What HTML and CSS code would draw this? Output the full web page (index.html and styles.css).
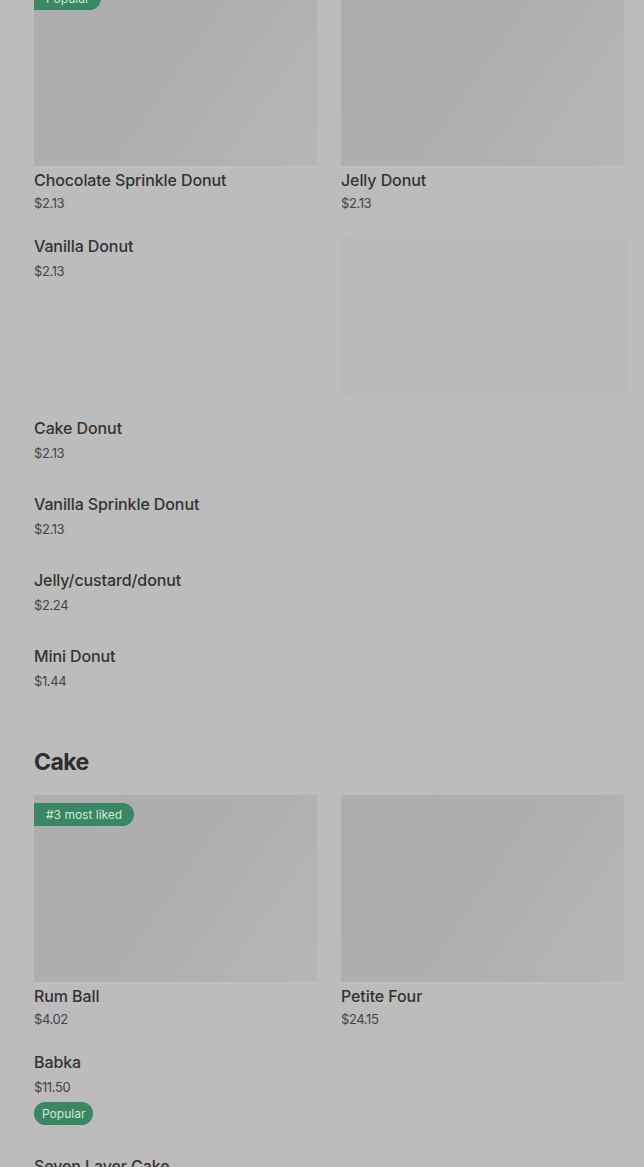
FILE: index.html
```html
<!DOCTYPE html>
<html>
<head>
<meta charset="utf-8">
<link rel="stylesheet" href="styles.css">
</head>
<body>
<main class="page">
  <section class="section">
    <div class="grid">
      <div class="card">
        <div class="thumb"><span class="badge badge-flag">Popular</span></div>
        <div class="name">Chocolate Sprinkle Donut</div>
        <div class="price">$2.13</div>
      </div>
      <div class="card">
        <div class="thumb"></div>
        <div class="name">Jelly Donut</div>
        <div class="price">$2.13</div>
      </div>
    </div>
    <div class="row row-ghost">
      <div class="row-text">
        <div class="name">Vanilla Donut</div>
        <div class="price price-list">$2.13</div>
      </div>
      <div class="ghost"></div>
    </div>
    <div class="list">
      <div class="item">
        <div class="name">Cake Donut</div>
        <div class="price price-list">$2.13</div>
      </div>
      <div class="item">
        <div class="name">Vanilla Sprinkle Donut</div>
        <div class="price price-list">$2.13</div>
      </div>
      <div class="item">
        <div class="name">Jelly/custard/donut</div>
        <div class="price price-list">$2.24</div>
      </div>
      <div class="item">
        <div class="name">Mini Donut</div>
        <div class="price price-list">$1.44</div>
      </div>
    </div>
  </section>

  <section class="section section-cake">
    <h2 class="heading">Cake</h2>
    <div class="grid">
      <div class="card">
        <div class="thumb"><span class="badge badge-flag">#3 most liked</span></div>
        <div class="name">Rum Ball</div>
        <div class="price">$4.02</div>
      </div>
      <div class="card">
        <div class="thumb"></div>
        <div class="name">Petite Four</div>
        <div class="price">$24.15</div>
      </div>
    </div>
    <div class="list list-cake">
      <div class="item">
        <div class="name">Babka</div>
        <div class="price price-list">$11.50</div>
        <span class="badge badge-pill">Popular</span>
      </div>
      <div class="item">
        <div class="name">Seven Layer Cake</div>
      </div>
    </div>
  </section>
</main>
</body>
</html>
```
FILE: styles.css
```css
html, body {
  margin: 0;
  padding: 0;
  background: #bcbcbc;
  height: 1167px;
  overflow: hidden;
}
body {
  font-family: Inter, Roboto, "Liberation Sans", sans-serif;
  color: #333333;
}
.page {
  margin-top: -21px;
  padding: 0 20px 0 34px;
}
.grid {
  display: grid;
  grid-template-columns: 283px 283px;
  column-gap: 24px;
}
.card {
  display: flex;
  flex-direction: column;
}
.thumb {
  height: 187px;
  background: linear-gradient(125deg, #adadad 0%, #afafaf 55%, #b6b6b6 100%);
  position: relative;
  margin-bottom: 2px;
  box-shadow: 0 3px 2px -1px rgba(255,255,255,0.08);
}
.name {
  font-size: 16px;
  font-weight: 500;
  line-height: 24px;
  color: #333333;
  letter-spacing: -0.1px;
}
.price {
  font-size: 13px;
  line-height: 20px;
  color: #444444;
  margin-top: 1px;
  letter-spacing: -0.4px;
}
.price-list {
  margin-top: 3px;
}
.row {
  display: grid;
  grid-template-columns: 283px 283px;
  column-gap: 24px;
  margin-top: 21px;
}
.ghost {
  margin-top: 2px;
  margin-left: 3px;
  height: 160px;
  background: #bababa;
  border-left: 3px solid #b8b8b8;
  box-shadow: 0 0 2px 1px rgba(0,0,0,0.015);
}
.list {
  display: flex;
  flex-direction: column;
  gap: 29px;
  margin-top: 20px;
}
.item {
  display: flex;
  flex-direction: column;
  align-items: flex-start;
}
.section-cake {
  margin-top: 55px;
}
.heading {
  margin: 0 0 17px 0;
  font-family: Inter, Roboto, sans-serif;
  font-size: 23px;
  font-weight: 700;
  line-height: 32px;
  letter-spacing: -0.6px;
  color: #2d2d2d;
}
.list-cake {
  margin-top: 21px;
}
.badge {
  display: inline-block;
  background: #3a8763;
  color: #d6e6dd;
  font-size: 12px;
  line-height: 23px;
  height: 23px;
  padding: 0 12px;
  white-space: nowrap;
}
.badge-flag {
  position: absolute;
  left: 0;
  top: 8px;
  border-radius: 0 12px 12px 0;
}
.badge-pill {
  margin-top: 5px;
  border-radius: 12px;
  padding: 0 8px;
}
```
